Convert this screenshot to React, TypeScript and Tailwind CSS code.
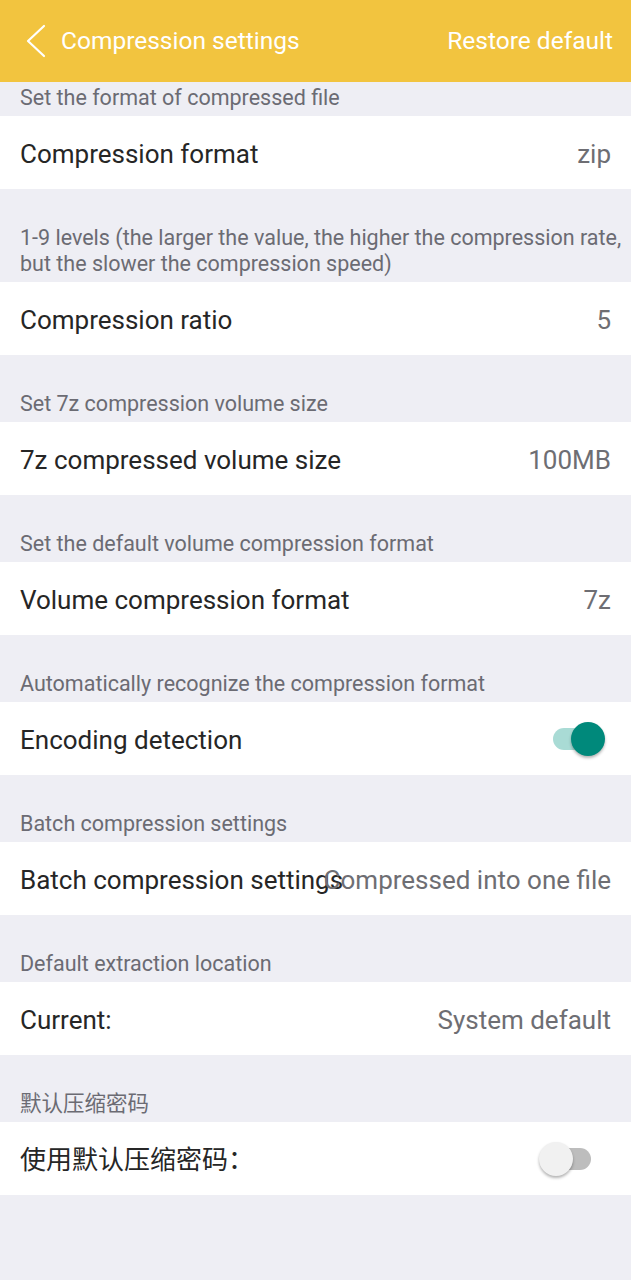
import React from "react";

const font = { fontFamily: 'Roboto, "Noto Sans CJK SC", sans-serif' };

function Header({ text, first }: { text: string; first?: boolean }) {
  return (
    <div className={`${first ? "pt-[3px]" : "pt-[36px]"} pb-[5px] pl-[20px] pr-[4px] text-[21.5px] leading-[26px] text-[#6b6b73]`}>
      {text}
    </div>
  );
}

function Row({ label, value, toggle }: { label: string; value?: string; toggle?: "on" | "off" }) {
  return (
    <div className="h-[73px] bg-white flex items-center px-[20px] pt-[3px]">
      <div className="flex-1 min-w-0 whitespace-nowrap text-[26px] text-[#262626]">{label}</div>
      {value && <div className="shrink-0 whitespace-nowrap text-[26px] text-[#6e6e73]">{value}</div>}
      {toggle === "on" && (
        <div className="relative w-[56px] h-[36px] mr-[6px] -mt-[3px] flex items-center">
          <div className="absolute left-[4px] right-[4px] h-[22px] rounded-full bg-[#a9dbd5]" />
          <div className="absolute right-0 w-[34px] h-[34px] rounded-full bg-[#00897b] shadow-[0_2px_3px_rgba(0,0,0,0.3)]" />
        </div>
      )}
      {toggle === "off" && (
        <div className="relative w-[56px] h-[36px] mr-[16px] -mt-[3px] flex items-center">
          <div className="absolute left-[4px] right-[4px] h-[22px] rounded-full bg-[#bdbdbd]" />
          <div className="absolute left-0 w-[34px] h-[34px] rounded-full bg-[#f1f1f1] shadow-[0_2px_3px_rgba(0,0,0,0.3)]" />
        </div>
      )}
    </div>
  );
}

export default function App() {
  return (
    <div className="w-[631px] h-[1280px] bg-[#eeeef4] overflow-hidden" style={font}>
      <div className="h-[82px] bg-[#f2c43f] flex items-center px-[20px] text-white">
        <svg width="26" height="36" viewBox="0 0 26 36" className="ml-[2px] mr-[13px]">
          <path d="M22 3 L6 18 L22 33" fill="none" stroke="white" strokeWidth="2.2" strokeLinecap="round" strokeLinejoin="round" />
        </svg>
        <div className="flex-1 text-[24.5px]">Compression settings</div>
        <div className="text-[24.5px] mr-[-2px]">Restore default</div>
      </div>
      <Header text="Set the format of compressed file" first />
      <Row label="Compression format" value="zip" />
      <Header text="1-9 levels (the larger the value, the higher the compression rate, but the slower the compression speed)" />
      <Row label="Compression ratio" value="5" />
      <Header text="Set 7z compression volume size" />
      <Row label="7z compressed volume size" value="100MB" />
      <Header text="Set the default volume compression format" />
      <Row label="Volume compression format" value="7z" />
      <Header text="Automatically recognize the compression format" />
      <Row label="Encoding detection" toggle="on" />
      <Header text="Batch compression settings" />
      <Row label="Batch compression settings" value="Compressed into one file" />
      <Header text="Default extraction location" />
      <Row label="Current:" value="System default" />
      <Header text="默认压缩密码" />
      <Row label="使用默认压缩密码：" toggle="off" />
    </div>
  );
}
